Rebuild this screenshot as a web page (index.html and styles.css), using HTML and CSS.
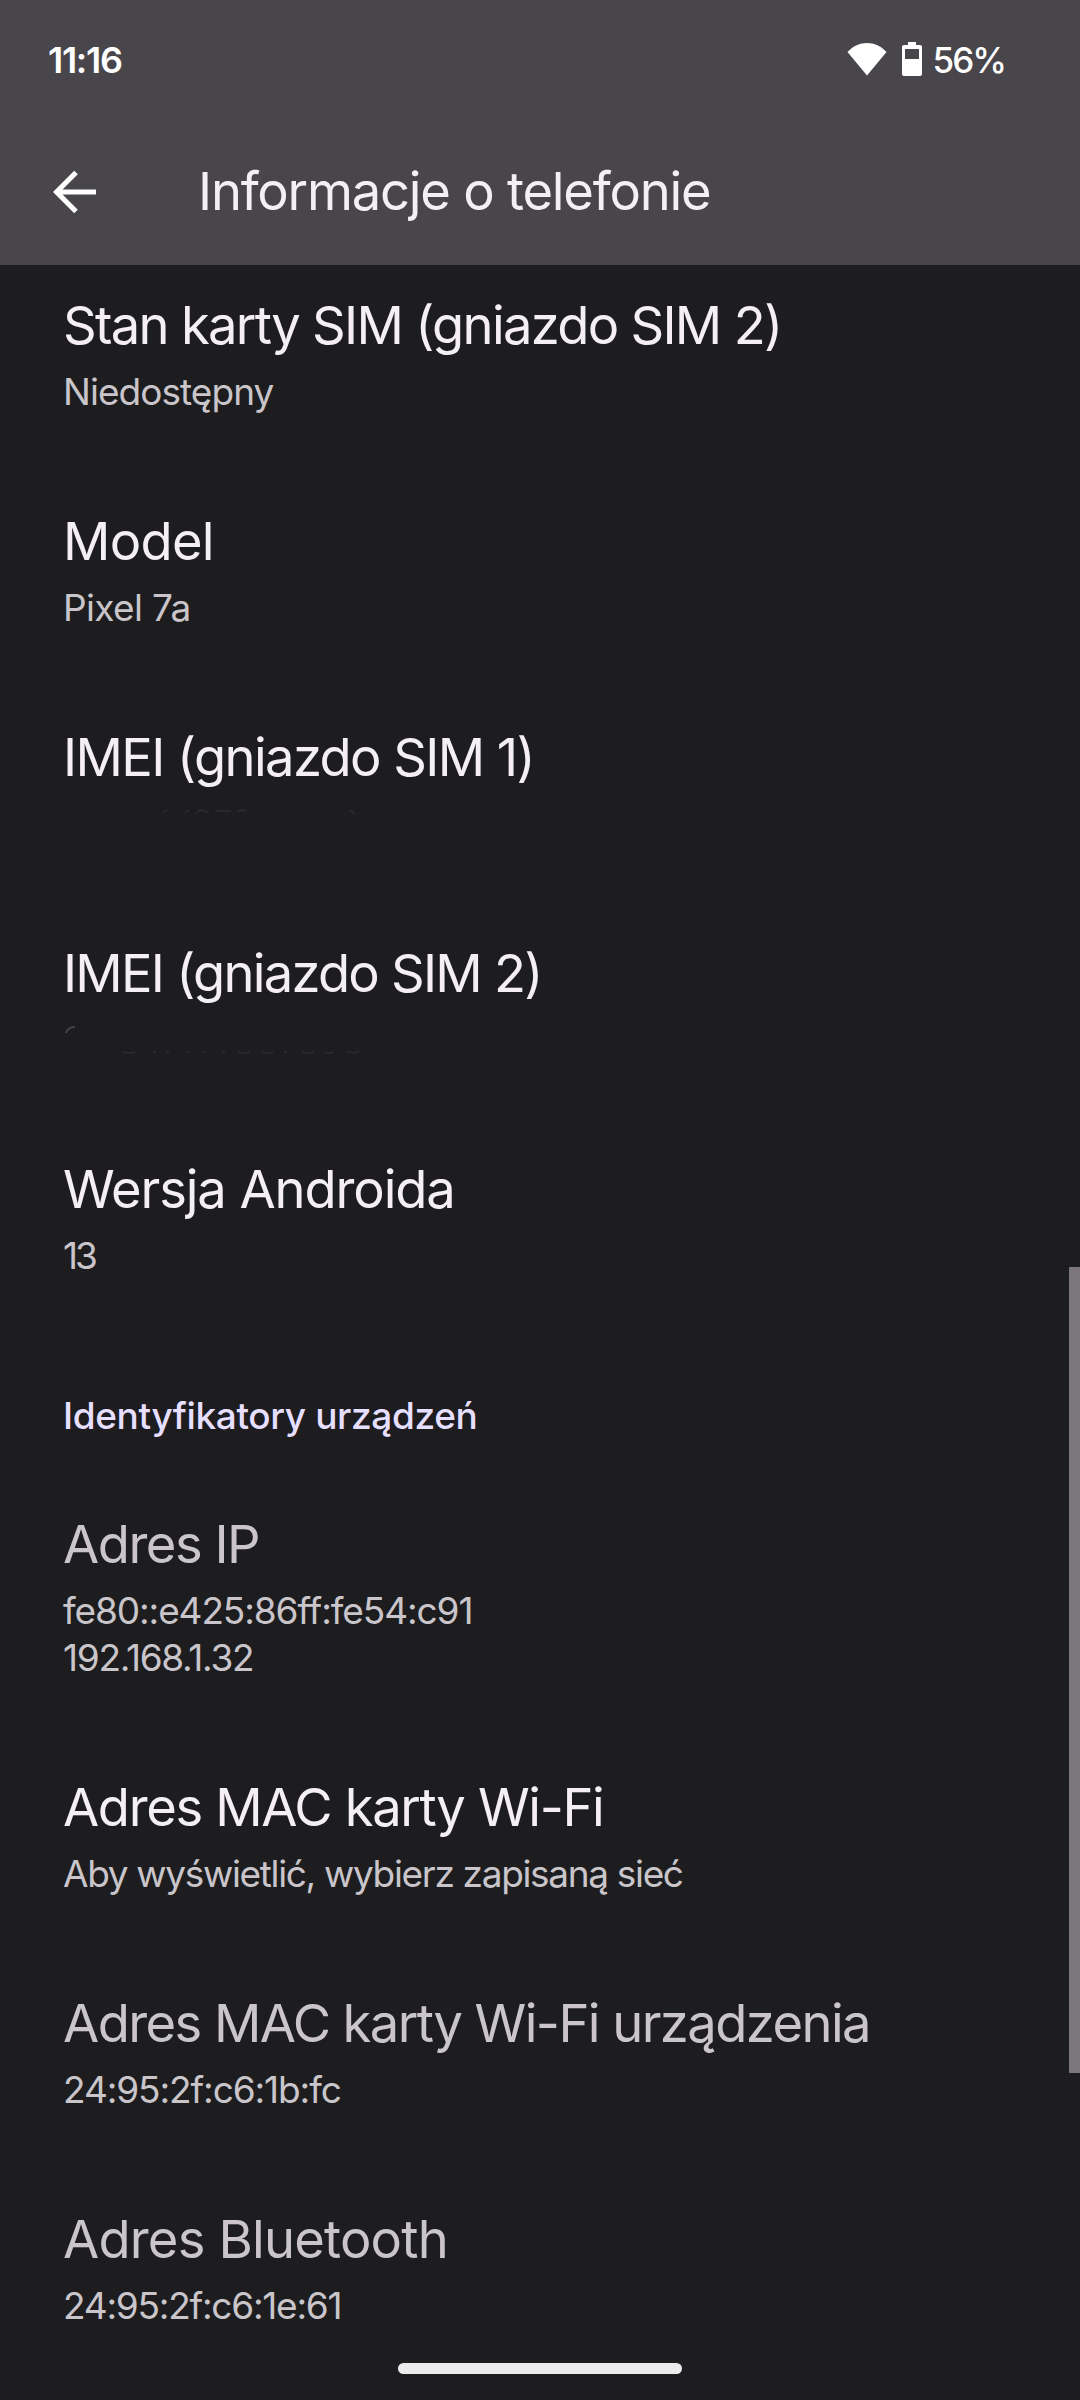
FILE: index.html
```
<!DOCTYPE html>
<html lang="pl">
<head>
    <meta charset="UTF-8">
    <meta name="viewport" content="width=device-width, initial-scale=1.0">
    <title>Informacje o telefonie</title>
    <link rel="stylesheet" href="styles.css">
</head>
<body>
    <div class="screen">
        <!-- Status bar + toolbar -->
        <header class="header">
            <div class="status-bar">
                <span class="clock">11:16</span>
                <div class="status-icons">
                    <svg class="wifi" width="40" height="34" viewBox="0 0 40 34">
                        <path d="M0.5 10C6 4 13 1 20 1s14 3 19.500 9L20 33.500z" fill="#fff"/>
                    </svg>
                    <svg class="battery" width="20" height="34" viewBox="0 0 20 34">
                        <path fill="#fff" fill-rule="evenodd" d="M6 0h8v3h4a2 2 0 0 1 2 2v27a2 2 0 0 1-2 2H2a2 2 0 0 1-2-2V5a2 2 0 0 1 2-2h4zM3 7v10h14V7z"/>
                    </svg>
                    <span class="percent">56%</span>
                </div>
            </div>
            <div class="toolbar">
                <svg class="back" width="44" height="44" viewBox="0 0 44 44">
                    <path d="M23 2.500L3.500 22 23 41.500M4 22h39" fill="none" stroke="#fff" stroke-width="5"/>
                </svg>
                <h1>Informacje o telefonie</h1>
            </div>
        </header>

        <!-- Scrolled list, first row partly under the toolbar -->
        <main class="content">
            <div class="list">
                <div class="item">
                    <div class="title sim-status">Stan karty SIM (gniazdo SIM 2)</div>
                    <div class="value unavailable">Niedostępny</div>
                </div>
                <div class="item">
                    <div class="title model">Model</div>
                    <div class="value model-name">Pixel 7a</div>
                </div>
                <div class="item">
                    <div class="title imei-1">IMEI (gniazdo SIM 1)</div>
                    <div class="value">
                        <svg class="erased" width="300" height="47" viewBox="0 0 300 47">
                            <path d="M100 13l4-3M122 13l4-3M133 13q6-6 12 0M152 11h16M174 12q5-3 9-1M287 10l5 4" fill="none" stroke="#2a2a2c" stroke-width="2"/>
                        </svg>
                    </div>
                </div>
                <div class="item">
                    <div class="title imei-2">IMEI (gniazdo SIM 2)</div>
                    <div class="value">
                        <svg class="erased" width="300" height="47" viewBox="0 0 300 47">
                            <path d="M3 17q2-6 9-6" fill="none" stroke="#454547" stroke-width="2"/>
                            <path d="M60 36q6 2 12 0M90 36h3M103 36h3M124 36h3M139 36h3M159 36h3M175 36q6 2 12 0M198 36q6 2 12 0M221 36h3M239 36q6 2 12 0M261 36q5 2 10 0M284 35q6 4 12 0" fill="none" stroke="#29292b" stroke-width="2"/>
                        </svg>
                    </div>
                </div>
                <div class="item">
                    <div class="title android">Wersja Androida</div>
                    <div class="value android-version">13</div>
                </div>

                <h2 class="category">Identyfikatory urządzeń</h2>

                <div class="item disabled">
                    <div class="title ip">Adres IP</div>
                    <div class="value ipv6">fe80::e425:86ff:fe54:c91</div>
                    <div class="value ipv4">192.168.1.32</div>
                </div>
                <div class="item">
                    <div class="title wifi-mac">Adres MAC karty Wi-Fi</div>
                    <div class="value hint">Aby wyświetlić, wybierz zapisaną sieć</div>
                </div>
                <div class="item disabled">
                    <div class="title device-mac">Adres MAC karty Wi-Fi urządzenia</div>
                    <div class="value">24:95:2f:c6:1b:fc</div>
                </div>
                <div class="item disabled">
                    <div class="title bluetooth">Adres Bluetooth</div>
                    <div class="value bluetooth-mac">24:95:2f:c6:1e:61</div>
                </div>
            </div>
            <div class="scrollbar"></div>
        </main>
        <div class="nav-handle"></div>
    </div>
</body>
</html>
```
FILE: styles.css
```
* {
    box-sizing: border-box;
}

body {
    margin: 0;
    background: #1d1d1f;
    color: #f3eff4;
    font-family: Inter, Roboto, sans-serif;
}

.screen {
    position: relative;
    width: 1080px;
    height: 2400px;
    display: flex;
    flex-direction: column;
    overflow: hidden;
}

/* Header */
.header {
    height: 265px;
    flex: none;
    background: #49464b;
}

.status-bar {
    height: 118px;
    padding: 0 75px 0 48px;
    display: flex;
    justify-content: space-between;
    align-items: center;
    color: #fff;
    font-weight: 600;
    font-size: 36px;
}

.clock {
    padding-top: 1px;
    letter-spacing: -1.3px;
}

.status-icons {
    display: flex;
    align-items: center;
}

.wifi {
    margin-right: 15px;
}

.battery {
    margin-right: 11px;
}

.percent {
    padding-top: 1px;
    font-size: 35px;
    font-weight: 500;
    letter-spacing: -2px;
}

.toolbar {
    height: 147px;
    padding: 0 0 2px 53px;
    display: flex;
    align-items: center;
}

.back {
    margin: 2px 101px 0 0;
}

h1 {
    margin: 0;
    font-size: 52.5px;
    font-weight: 400;
    line-height: 66px;
    letter-spacing: -1.22px;
}

/* List */
.content {
    position: relative;
    flex: 1;
    overflow: hidden;
}

.list {
    margin-top: -19px;
}

.item {
    padding: 46px 63px 47px;
    white-space: nowrap;
}

.title {
    margin-bottom: 10px;
    font-size: 52.5px;
    line-height: 66px;
    letter-spacing: -1.5px;
}

.value {
    height: 47px;
    font-size: 37px;
    line-height: 47px;
    color: #c9c5ca;
    letter-spacing: -1.1px;
}

.disabled .title {
    color: #c9c5ca;
}

.erased {
    display: block;
}

.category {
    margin: 0;
    padding: 66px 63px 26px;
    font-size: 37px;
    font-weight: 500;
    line-height: 47px;
    letter-spacing: -0.38px;
    color: #e6dfff;
}

/* Tracking per label */
.sim-status { letter-spacing: -1.7px; }
.model { letter-spacing: -0.7px; }
.imei-1 { letter-spacing: -1.6px; }
.imei-2 { letter-spacing: -1.75px; }
.android { letter-spacing: -1.1px; }
.ip { letter-spacing: -1.49px; }
.wifi-mac { letter-spacing: -1.36px; }
.device-mac { letter-spacing: -1.57px; }
.bluetooth { letter-spacing: -0.8px; }
.unavailable { letter-spacing: -0.95px; }
.model-name { letter-spacing: -0.65px; }
.android-version { letter-spacing: -3px; }
.ipv4 { letter-spacing: -1.28px; }
.hint { letter-spacing: -1.33px; }
.bluetooth-mac { letter-spacing: -1.25px; }

.scrollbar {
    position: absolute;
    top: 1002px;
    right: 0;
    width: 11px;
    height: 806px;
    background: #7a767b;
}

.nav-handle {
    position: absolute;
    left: 398px;
    bottom: 26px;
    width: 284px;
    height: 11px;
    border-radius: 6px;
    background: #ececec;
}
```
